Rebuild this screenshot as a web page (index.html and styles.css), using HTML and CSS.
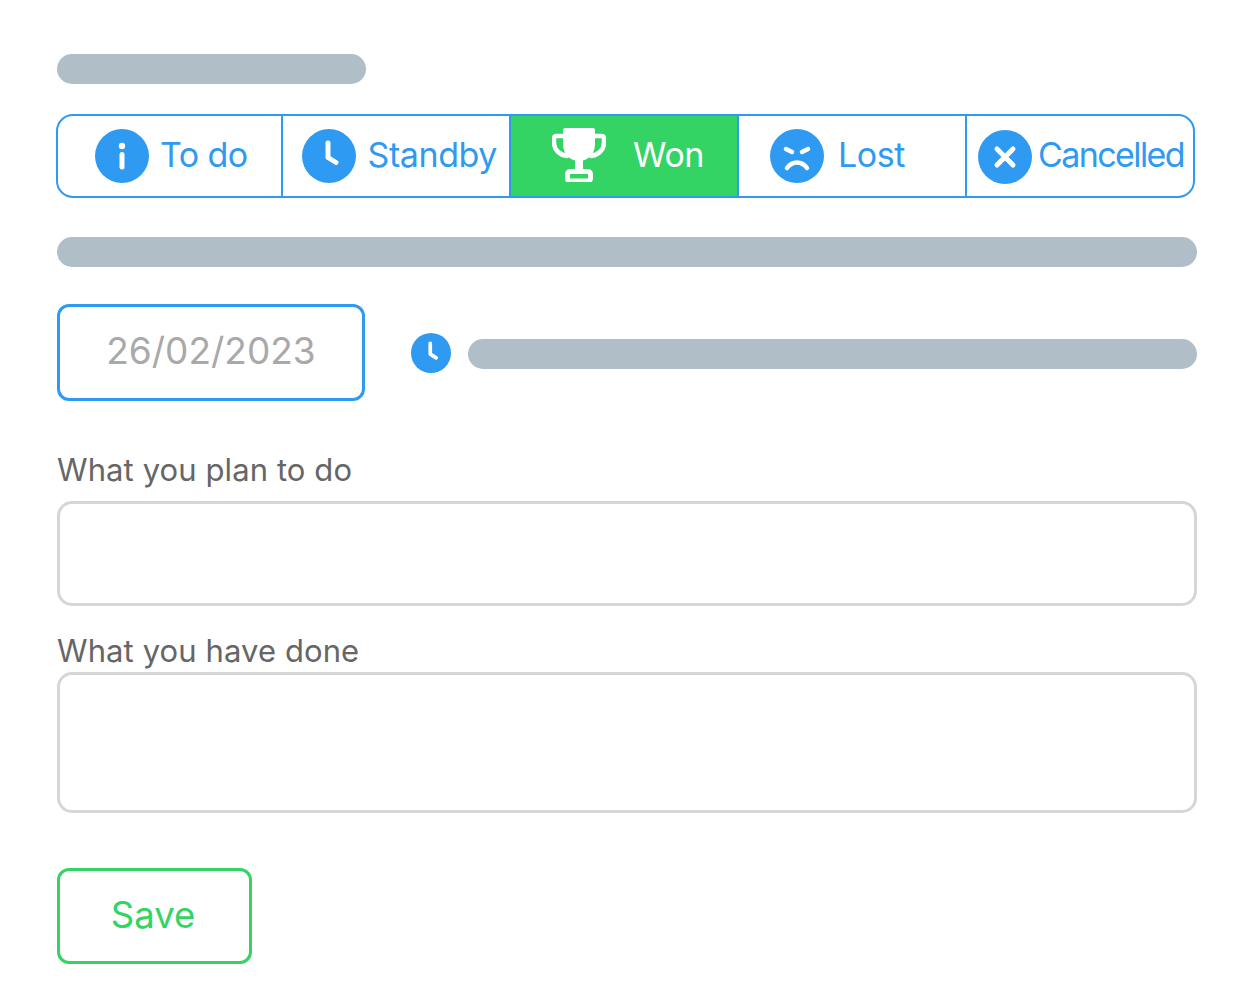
FILE: index.html
```html
<!DOCTYPE html>
<html>
	<head>
		<meta charset="utf-8" />
		<title>Task</title>
		<link rel="stylesheet" href="styles.css">
	</head>
	<body>
		<div class="skeleton skeleton-title"></div>

		<ul class="status">
			<li class="status-item">
				<svg class="status-icon" viewBox="0 0 54 54"><circle cx="27" cy="27" r="27" fill="#2e9af2"/><circle cx="27" cy="17" r="3.200" fill="#fff"/><path d="M27 25.500v12.500" stroke="#fff" stroke-width="5" stroke-linecap="round"/></svg>
				<span class="status-label">To do</span>
			</li>
			<li class="status-item">
				<svg class="status-icon" viewBox="0 0 54 54"><circle cx="27" cy="27" r="27" fill="#2e9af2"/><path d="M26 14v14.500l8 5" fill="none" stroke="#fff" stroke-width="5" stroke-linecap="round" stroke-linejoin="round"/></svg>
				<span class="status-label">Standby</span>
			</li>
			<li class="status-item status-won">
				<svg class="status-icon" viewBox="0 0 54 54"><path d="M11 8H4a2 2 0 0 0-2 2v5c0 7 6 12 13 13M43 8h7a2 2 0 0 1 2 2v5c0 7-6 12-13 13" fill="none" stroke="#fff" stroke-width="4.500" stroke-linecap="round"/><path d="M11 2a2 2 0 0 1 2-2h28a2 2 0 0 1 2 2v14c0 10-7 17-16 17s-16-7-16-17z" fill="#fff"/><path d="M23 31h8v11h-8z" fill="#fff"/><rect x="15.500" y="43.500" width="23" height="9.500" rx="2.500" fill="none" stroke="#fff" stroke-width="5"/></svg>
				<span class="status-label won-label">Won</span>
			</li>
			<li class="status-item">
				<svg class="status-icon" viewBox="0 0 54 54"><circle cx="27" cy="27" r="27" fill="#2e9af2"/><path d="M16 20l6 3M38 20l-6 3" stroke="#fff" stroke-width="4.500" stroke-linecap="round"/><path d="M17 39c3-4 7-5.500 10-5.500s7 1.500 10 5.500" fill="none" stroke="#fff" stroke-width="4.500" stroke-linecap="round"/></svg>
				<span class="status-label">Lost</span>
			</li>
			<li class="status-item status-last">
				<svg class="status-icon" viewBox="0 0 54 54"><circle cx="27" cy="27" r="27" fill="#2e9af2"/><path d="M19 19l16 16M35 19L19 35" stroke="#fff" stroke-width="5" stroke-linecap="round"/></svg>
				<span class="status-label">Cancelled</span>
			</li>
		</ul>

		<div class="skeleton skeleton-wide"></div>

		<div class="date-row">
			<div class="date-box">26/02/2023</div>
			<svg class="date-clock" viewBox="0 0 54 54"><circle cx="27" cy="27" r="27" fill="#2e9af2"/><path d="M26 14v14.500l8 5" fill="none" stroke="#fff" stroke-width="5" stroke-linecap="round" stroke-linejoin="round"/></svg>
			<div class="skeleton skeleton-time"></div>
		</div>

		<label class="field-label label-plan">What you plan to do</label>
		<div class="field field-plan"></div>

		<label class="field-label label-done">What you have done</label>
		<div class="field field-done"></div>

		<button class="save">Save</button>
	</body>
</html>
```

FILE: styles.css
```css
body,ul,li{
	margin: 0;
	padding: 0;
}

ul{
	list-style-type: none;
}

body{
	background: #ffffff;
	font-family: "Inter", "Liberation Sans", sans-serif;
	padding: 54px 61px 0 57px;
	height: 943px;
	overflow: hidden;
}

.skeleton{
	background: #b0bec8;
	border-radius: 15px;
	height: 30px;
}

.skeleton-title{
	width: 309px;
}

.skeleton-wide{
	margin-top: 39px;
}

.status{
	display: flex;
	height: 84px;
	margin-top: 30px;
	width: 1139px;
	margin-left: -1px;
	box-sizing: border-box;
	border: 2px solid #2e9af2;
	border-radius: 17px;
	overflow: hidden;
}

.status-item{
	flex: 0 0 228px;
	box-sizing: border-box;
	border-right: 2px solid #2e9af2;
	display: flex;
	align-items: center;
	padding-left: 35px;
	color: #2e9af2;
	font-size: 34px;
	letter-spacing: -0.4px;
}

.status-label{
	position: relative;
	top: -2px;
}

.status-item:first-child{
	flex-basis: 225px;
	padding-left: 37px;
	letter-spacing: -0.6px;
}

.status-item:first-child .status-icon{
	margin-right: 11px;
}

.status-item:nth-child(2){
	padding-left: 18.500px;
}

.status-item:nth-child(2) .status-icon{
	margin-right: 12px;
}

.status-item:nth-child(4){
	padding-left: 31px;
}

.status-item:nth-child(4) .status-icon{
	margin-right: 14px;
}

.status-last{
	border-right: none;
	flex: 1;
	padding-left: 11px;
	letter-spacing: -1.6px;
}

.status-icon{
	width: 54px;
	height: 54px;
	flex: none;
	margin-right: 13px;
}

.status-won{
	background: #33d463;
	color: #ffffff;
	border-left: 2px solid #2e9af2;
	margin-left: -2px;
	flex-basis: 230px;
	padding-left: 41px;
}

.status-won .status-icon{
	margin-top: -2px;
	margin-right: 12px;
}

.won-label{
	margin-left: 15px;
}

.status-item.status-last .status-icon{
	margin-right: 6px;
	margin-top: 2px;
}

.date-row{
	display: flex;
	align-items: center;
	margin-top: 37px;
}

.date-box{
	box-sizing: border-box;
	width: 308px;
	height: 97px;
	padding-bottom: 4px;
	border: 3px solid #2e9af2;
	border-radius: 12px;
	color: #a9a9a9;
	font-size: 37px;
	display: flex;
	align-items: center;
	justify-content: center;
}

.date-clock{
	width: 40px;
	height: 40px;
	margin-left: 46px;
}

.skeleton-time{
	flex: 1;
	margin-left: 17px;
	margin-top: 3px;
}

.field-label{
	display: block;
	color: #666666;
	font-size: 31px;
	line-height: 38px;
	letter-spacing: 0.1px;
}

.label-plan{
	margin-top: 50px;
}

.label-done{
	margin-top: 26px;
}

.field{
	box-sizing: border-box;
	border: 3px solid #d6d6d6;
	border-radius: 15px;
	background: #ffffff;
}

.field-plan{
	height: 105px;
	margin-top: 12px;
}

.field-done{
	height: 141px;
	margin-top: 2px;
}

.save{
	display: block;
	box-sizing: border-box;
	width: 195px;
	height: 96px;
	margin-top: 55px;
	padding: 0 3px 3px 0;
	background: #ffffff;
	border: 3px solid #33d463;
	border-radius: 12px;
	color: #33d463;
	font-family: inherit;
	font-size: 36.500px;
}
```
